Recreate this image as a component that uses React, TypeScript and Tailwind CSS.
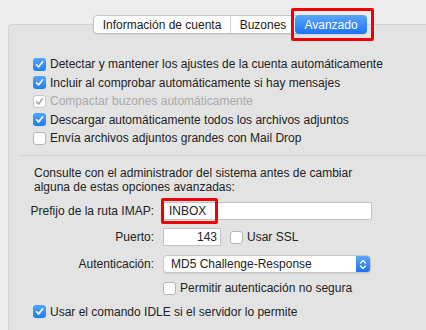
import React from 'react';

const font = { fontFamily: '"Liberation Sans", Arial, sans-serif' };

const Check: React.FC<{ checked?: boolean; disabled?: boolean }> = ({ checked, disabled }) => {
  if (!checked) {
    return <span className="block w-[13px] h-[13px] shrink-0 rounded-[3px] border border-[#b5b5b5] bg-white" />;
  }
  return (
    <span
      className={`flex items-center justify-center w-[13px] h-[13px] shrink-0 rounded-[3px] ${
        disabled ? 'bg-white border border-[#c8c8c8]' : 'bg-gradient-to-b from-[#56a4fb] to-[#1c7cf5]'
      }`}
    >
      <svg width="9" height="9" viewBox="0 0 9 9">
        <path
          d="M1.5 4.8 L3.6 7 L7.6 1.8"
          fill="none"
          stroke={disabled ? '#a8a8a8' : '#ffffff'}
          strokeWidth="1.6"
          strokeLinecap="round"
          strokeLinejoin="round"
        />
      </svg>
    </span>
  );
};

const Row: React.FC<{ checked?: boolean; disabled?: boolean; label: string }> = ({ checked, disabled, label }) => (
  <div className="flex items-center h-[18.5px] gap-[4px]">
    <Check checked={checked} disabled={disabled} />
    <span className={disabled ? 'text-[#a9a9a9]' : 'text-[#222]'}>{label}</span>
  </div>
);

export default function App() {
  return (
    <div className="w-[426px] h-[330px] bg-[#ececec] overflow-hidden text-[12px]" style={font}>
      <div className="flex pt-[15px] pl-[93px] h-[33px] relative z-10">
        <div className="flex h-[19px] rounded-[4px] border border-[#c4c4c4] bg-white shadow-[0_1px_1px_rgba(0,0,0,0.08)] text-[#222]">
          <div className="w-[137px] flex items-center justify-center border-r border-[#d4d4d4]">Información de cuenta</div>
          <div className="w-[64px] flex items-center justify-center">Buzones</div>
          <div className="relative w-[72px] -my-px -mr-px flex items-center justify-center rounded-[4px] bg-gradient-to-b from-[#5aa6fb] to-[#1a72f1] text-white">
            Avanzado
            <span className="absolute -left-[4px] -right-[7px] -top-[7px] -bottom-[7px] border-[3px] border-[#f00000] rounded-[2px]" />
          </div>
        </div>
      </div>
      <div className="ml-[8px] -mt-[9px] h-[320px] bg-[#e3e3e3] border-t border-l border-[#d2d2d2] rounded-tl-[4px]">
        <div className="pl-[24px] pt-[30px]">
          <Row checked label="Detectar y mantener los ajustes de la cuenta automáticamente" />
          <Row checked label="Incluir al comprobar automáticamente si hay mensajes" />
          <Row checked disabled label="Compactar buzones automáticamente" />
          <Row checked label="Descargar automáticamente todos los archivos adjuntos" />
          <Row label="Envía archivos adjuntos grandes con Mail Drop" />
        </div>
        <div className="ml-[12px] mt-[7px] border-t border-[#cdcdcd]" />
        <div className="pl-[25px] pt-[10px] leading-[14px] text-[#222]">
          <div>Consulte con el administrador del sistema antes de cambiar</div>
          <div>alguna de estas opciones avanzadas:</div>
        </div>
        <div className="grid grid-cols-[145px_1fr] gap-x-[9px] items-center text-[#222] mt-[4px]">
          <div className="text-right h-[26px] leading-[26px]">Prefijo de la ruta IMAP:</div>
          <div className="relative w-[209px] h-[18px] bg-white border border-[#c3c3c3] pl-[5px] leading-[16px]">
            INBOX
            <span className="absolute -left-[3px] -top-[5px] w-[57px] h-[26px] border-[3px] border-[#f00000] rounded-[2px]" />
          </div>
          <div className="text-right h-[27px] leading-[27px]">Puerto:</div>
          <div className="flex items-center gap-[9px]">
            <div className="w-[58px] h-[18px] bg-white border border-[#c3c3c3] pr-[3px] text-right leading-[16px]">143</div>
            <div className="flex items-center gap-[4px]">
              <Check />
              <span>Usar SSL</span>
            </div>
          </div>
          <div className="text-right h-[27px] leading-[27px]">Autenticación:</div>
          <div className="flex w-[208px] h-[18px] rounded-[4px] bg-white border border-[#c6c6c6] shadow-[0_1px_1px_rgba(0,0,0,0.08)] overflow-hidden">
            <div className="flex-1 pl-[7px] leading-[16px]">MD5 Challenge-Response</div>
            <div className="w-[14px] flex items-center justify-center bg-gradient-to-b from-[#5aa6fb] to-[#1a72f1]">
              <svg width="8" height="11" viewBox="0 0 8 11">
                <path d="M1.5 4 L4 1.5 L6.5 4 M1.5 7 L4 9.5 L6.5 7" fill="none" stroke="#fff" strokeWidth="1.3" strokeLinecap="round" strokeLinejoin="round" />
              </svg>
            </div>
          </div>
          <div />
          <div className="flex items-center gap-[4px] h-[21px]">
            <Check />
            <span>Permitir autenticación no segura</span>
          </div>
        </div>
        <div className="pl-[24px] mt-[4px]">
          <Row checked label="Usar el comando IDLE si el servidor lo permite" />
        </div>
      </div>
    </div>
  );
}
